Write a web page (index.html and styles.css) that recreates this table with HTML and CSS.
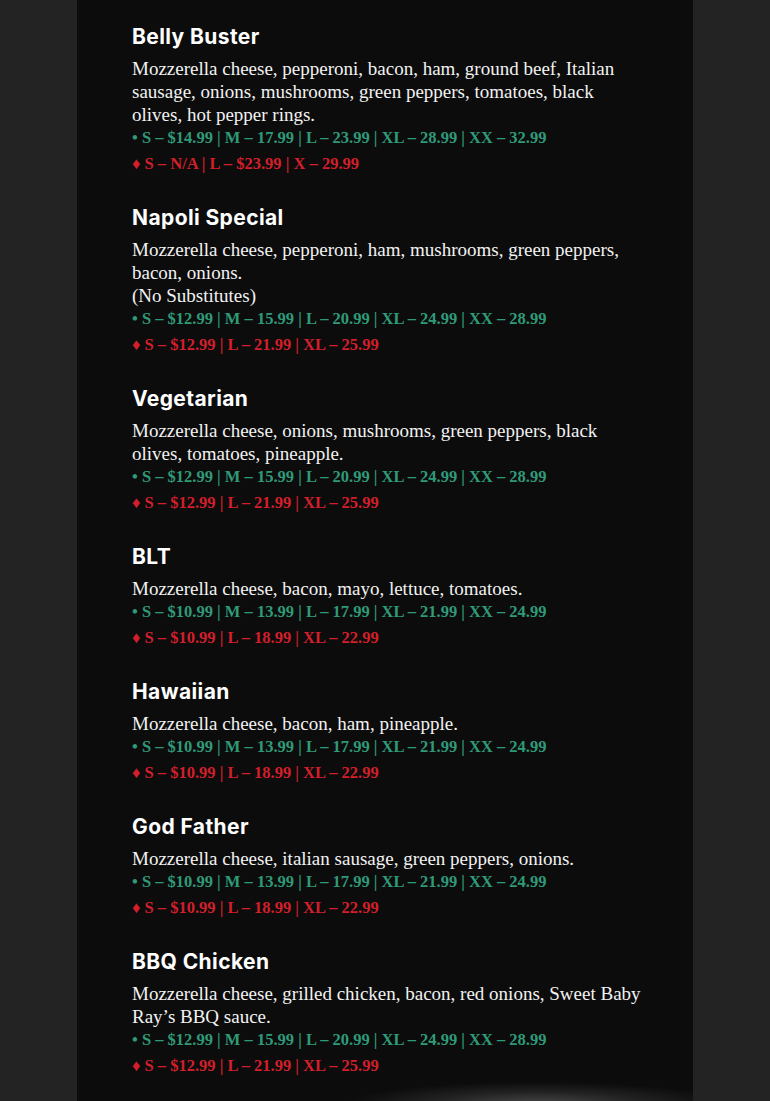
FILE: index.html
```html
<!DOCTYPE html>
<html lang="en">
<head>
<meta charset="utf-8">
<title>Specialty Pizzas</title>
<link rel="stylesheet" href="styles.css">
</head>
<body>
<main class="panel">
  <section class="item">
    <h2 class="name">Belly Buster</h2>
    <p class="desc">Mozzerella cheese, pepperoni, bacon, ham, ground beef, Italian sausage, onions, mushrooms, green peppers, tomatoes, black olives, hot pepper rings.</p>
    <p class="price green">• S – $14.99 | M – 17.99 | L – 23.99 | XL – 28.99 | XX – 32.99</p>
    <p class="price red">♦ S – N/A | L – $23.99 | X – 29.99</p>
  </section>
  <section class="item">
    <h2 class="name">Napoli Special</h2>
    <p class="desc">Mozzerella cheese, pepperoni, ham, mushrooms, green peppers, bacon, onions.<br>(No Substitutes)</p>
    <p class="price green">• S – $12.99 | M – 15.99 | L – 20.99 | XL – 24.99 | XX – 28.99</p>
    <p class="price red">♦ S – $12.99 | L – 21.99 | XL – 25.99</p>
  </section>
  <section class="item">
    <h2 class="name">Vegetarian</h2>
    <p class="desc">Mozzerella cheese, onions, mushrooms, green peppers, black olives, tomatoes, pineapple.</p>
    <p class="price green">• S – $12.99 | M – 15.99 | L – 20.99 | XL – 24.99 | XX – 28.99</p>
    <p class="price red">♦ S – $12.99 | L – 21.99 | XL – 25.99</p>
  </section>
  <section class="item">
    <h2 class="name">BLT</h2>
    <p class="desc">Mozzerella cheese, bacon, mayo, lettuce, tomatoes.</p>
    <p class="price green">• S – $10.99 | M – 13.99 | L – 17.99 | XL – 21.99 | XX – 24.99</p>
    <p class="price red">♦ S – $10.99 | L – 18.99 | XL – 22.99</p>
  </section>
  <section class="item">
    <h2 class="name">Hawaiian</h2>
    <p class="desc">Mozzerella cheese, bacon, ham, pineapple.</p>
    <p class="price green">• S – $10.99 | M – 13.99 | L – 17.99 | XL – 21.99 | XX – 24.99</p>
    <p class="price red">♦ S – $10.99 | L – 18.99 | XL – 22.99</p>
  </section>
  <section class="item">
    <h2 class="name">God Father</h2>
    <p class="desc">Mozzerella cheese, italian sausage, green peppers, onions.</p>
    <p class="price green">• S – $10.99 | M – 13.99 | L – 17.99 | XL – 21.99 | XX – 24.99</p>
    <p class="price red">♦ S – $10.99 | L – 18.99 | XL – 22.99</p>
  </section>
  <section class="item">
    <h2 class="name">BBQ Chicken</h2>
    <p class="desc">Mozzerella cheese, grilled chicken, bacon, red onions, Sweet Baby Ray’s BBQ sauce.</p>
    <p class="price green">• S – $12.99 | M – 15.99 | L – 20.99 | XL – 24.99 | XX – 28.99</p>
    <p class="price red">♦ S – $12.99 | L – 21.99 | XL – 25.99</p>
  </section>
</main>
</body>
</html>
```

FILE: styles.css
```css
html, body {
  margin: 0;
  padding: 0;
  background: #232323;
  height: 1101px;
  overflow: hidden;
}

.panel {
  width: 616px;
  margin-left: 77px;
  box-sizing: border-box;
  padding: 25px 48px 0 55px;
  min-height: 1101px;
  background:
    radial-gradient(ellipse 190px 22px at 460px 1104px, rgba(120,120,120,0.55), rgba(120,120,120,0.2) 55%, rgba(120,120,120,0) 100%),
    #0c0c0c;
  display: flex;
  flex-direction: column;
  gap: 31px;
}

.item {
  display: flex;
  flex-direction: column;
}

.name {
  margin: 0 0 8px;
  font-family: "Inter", "Noto Sans", sans-serif;
  font-weight: 700;
  font-size: 21px;
  line-height: 24px;
  letter-spacing: 0.4px;
  color: #ffffff;
}

.desc {
  margin: 0;
  font-family: "Liberation Serif", "DejaVu Serif", serif;
  font-size: 19px;
  line-height: 23px;
  color: #f2f2f2;
}

.price {
  margin: 0;
  font-family: "Liberation Serif", "DejaVu Serif", serif;
  font-weight: 700;
  font-size: 16.5px;
  line-height: 23px;
}

.green { color: #2f9a78; }
.red { color: #d21f2b; margin-top: 3px; }
```
